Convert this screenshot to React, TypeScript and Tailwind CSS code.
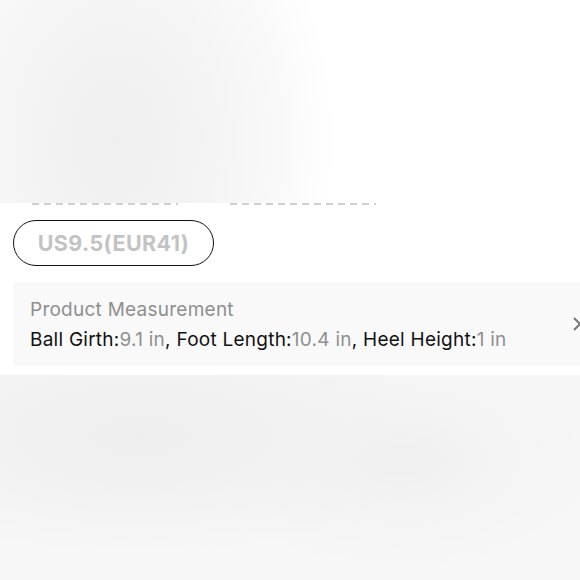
import React from 'react';

const Dashes: React.FC<{ className?: string }> = ({ className }) => (
  <div className={`h-[2px] bg-[repeating-linear-gradient(90deg,#cfcfcf_0_7px,transparent_7px_12px)] ${className ?? ''}`} />
);

const App: React.FC = () => {
  return (
    <div className="w-[580px] h-[580px] overflow-hidden bg-white font-['Inter','Liberation_Sans',sans-serif]">
      {/* blurred image area above */}
      <div className="h-[203px] bg-[radial-gradient(ellipse_220px_300px_at_115px_140px,#efefef_0%,#f4f4f4_45%,#f9f9f9_75%,#ffffff_100%)]" />

      <div className="flex gap-[52px] pl-[32px]">
        <Dashes className="w-[146px]" />
        <Dashes className="w-[146px]" />
      </div>

      <div className="pt-[15px] pl-[13px]">
        <button className="h-[46px] w-[201px] rounded-full border-[1.5px] border-[#111] text-[21.5px] font-bold text-[#c3c3c3] tracking-[0.4px]">
          US9.5(EUR41)
        </button>
      </div>

      <div className="mt-[16px] ml-[13px] h-[84px] bg-[#f9f9f9] pl-[17px] pt-[14px] flex items-center justify-between">
        <div className="flex flex-col gap-[7px] -mt-[14px]">
          <div className="text-[19px] leading-[23px] tracking-[0.25px] text-[#8f8f8f]">Product Measurement</div>
          <div className="text-[19px] leading-[23px] tracking-[0.25px] text-[#111]">
            Ball Girth:<span className="text-[#8f8f8f]">9.1 in</span>, Foot Length:<span className="text-[#8f8f8f]">10.4 in</span>, Heel Height:<span className="text-[#8f8f8f]">1 in</span>
          </div>
        </div>
        <svg width="10" height="16" viewBox="0 0 10 16" className="mr-[-2px] -mt-[14px]">
          <path d="M2 2l6 6-6 6" stroke="#777" strokeWidth="2" fill="none" />
        </svg>
      </div>

      {/* blurred area below */}
      <div className="mt-[9px] h-[205px] bg-[radial-gradient(ellipse_300px_120px_at_140px_60px,#eeeeee_0%,#f1f1f1_40%,transparent_100%),radial-gradient(ellipse_200px_110px_at_400px_85px,#efefef_0%,#f3f3f3_40%,transparent_100%),linear-gradient(#f6f6f6,#f7f7f7)]" />
    </div>
  );
};

export default App;
